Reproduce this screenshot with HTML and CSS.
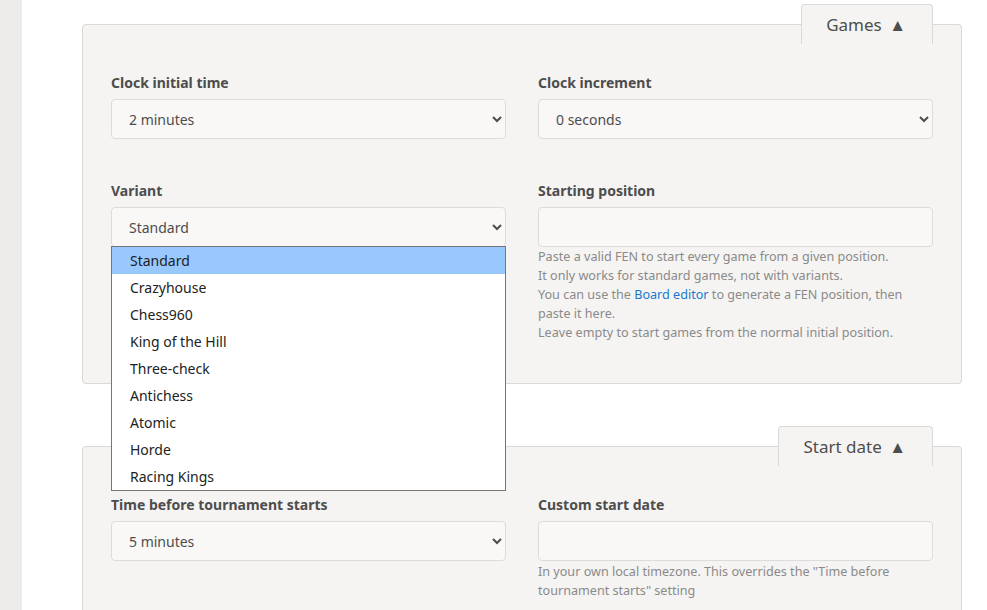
FILE: index.html
```html
<!DOCTYPE html>
<html lang="en">
<head>
<meta charset="utf-8">
<link rel="stylesheet" href="styles.css">
</head>
<body>
<div class="page">
  <aside class="side"></aside>
  <main class="main">
    <fieldset class="panel">
      <legend class="tab">Games <span class="tri">▲</span></legend>
      <div class="grid">
        <div class="group">
          <label class="lbl">Clock initial time</label>
          <select class="field"><option>2 minutes</option></select>
        </div>
        <div class="group">
          <label class="lbl">Clock increment</label>
          <select class="field"><option>0 seconds</option></select>
        </div>
        <div class="group">
          <label class="lbl">Variant</label>
          <div class="select-wrap">
            <select class="field"><option>Standard</option></select>
            <ul class="menu">
              <li class="item active">Standard</li>
              <li class="item">Crazyhouse</li>
              <li class="item">Chess960</li>
              <li class="item">King of the Hill</li>
              <li class="item">Three-check</li>
              <li class="item">Antichess</li>
              <li class="item">Atomic</li>
              <li class="item">Horde</li>
              <li class="item">Racing Kings</li>
            </ul>
          </div>
        </div>
        <div class="group">
          <label class="lbl">Starting position</label>
          <input class="field" type="text">
          <p class="help">Paste a valid FEN to start every game from a given position.<br>It only works for standard games, not with variants.<br>You can use the <a class="link" href="#">Board editor</a> to generate a FEN position, then paste it here.<br>Leave empty to start games from the normal initial position.</p>
        </div>
      </div>
    </fieldset>
    <fieldset class="panel">
      <legend class="tab">Start date <span class="tri">▲</span></legend>
      <div class="grid">
        <div class="group">
          <label class="lbl">Time before tournament starts</label>
          <select class="field"><option>5 minutes</option></select>
        </div>
        <div class="group">
          <label class="lbl">Custom start date</label>
          <input class="field" type="text">
          <p class="help help-date">In your own local timezone. This overrides the "Time before tournament starts" setting</p>
        </div>
      </div>
    </fieldset>
  </main>
</div>
</body>
</html>
```

FILE: styles.css
```css
html, body {
  margin: 0;
  padding: 0;
  background: #ffffff;
  font-family: "Noto Sans", "Liberation Sans", sans-serif;
  color: #4d4d4d;
}
.page {
  display: flex;
  min-height: 610px;
}
.side {
  width: 22px;
  flex: none;
  background: #edebe9;
}
.main {
  flex: 1;
  padding: 4px 25px 0 60px;
}
.panel {
  margin: 0 0 42px 0;
  padding: 29px 28px 41px;
  border: 1px solid #d9d9d9;
  border-radius: 4px;
  background: #f5f4f2;
  min-width: 0;
}
.tab {
  margin-left: auto;
  height: 40px;
  line-height: 40px;
  padding: 0 26px 0 24px;
  box-sizing: border-box;
  border: 1px solid #d9d9d9;
  border-bottom: none;
  border-radius: 4px 4px 0 0;
  background: #f5f4f2;
  font-size: 17px;
  color: #4d4d4d;
}
.tri {
  font-size: 17px;
  margin-left: 3px;
}
.grid {
  display: grid;
  grid-template-columns: 1fr 1fr;
  column-gap: 32px;
  row-gap: 42px;
}
.group {
  display: flex;
  flex-direction: column;
}
.lbl {
  display: block;
  font-size: 14px;
  font-weight: bold;
  line-height: 20px;
  margin-bottom: 6px;
  color: #4d4d4d;
}
.field {
  box-sizing: border-box;
  width: 100%;
  height: 40px;
  margin: 0;
  padding: 0 14px 0 13px;
  border: 1px solid #dcdcdc;
  border-radius: 4px;
  background: #f9f8f7;
  font-family: "Noto Sans", "Liberation Sans", sans-serif;
  font-size: 14px;
  color: #4d4d4d;
}
.select-wrap {
  position: relative;
}
.menu {
  position: absolute;
  top: calc(100% - 1px);
  left: 0;
  right: 0;
  margin: 0;
  padding: 0;
  list-style: none;
  background: #ffffff;
  border: 1px solid #767676;
  z-index: 5;
}
.item {
  height: 27px;
  line-height: 27px;
  padding-left: 18px;
  font-size: 14px;
  color: #222222;
}
.item.active {
  background: #99c8ff;
}
.help {
  margin: 0;
  font-size: 12.6px;
  line-height: 19px;
  color: #8a8a8a;
}
.help-date {
  margin-top: 1px;
}
.link {
  color: #1b78d0;
  text-decoration: none;
}
```
